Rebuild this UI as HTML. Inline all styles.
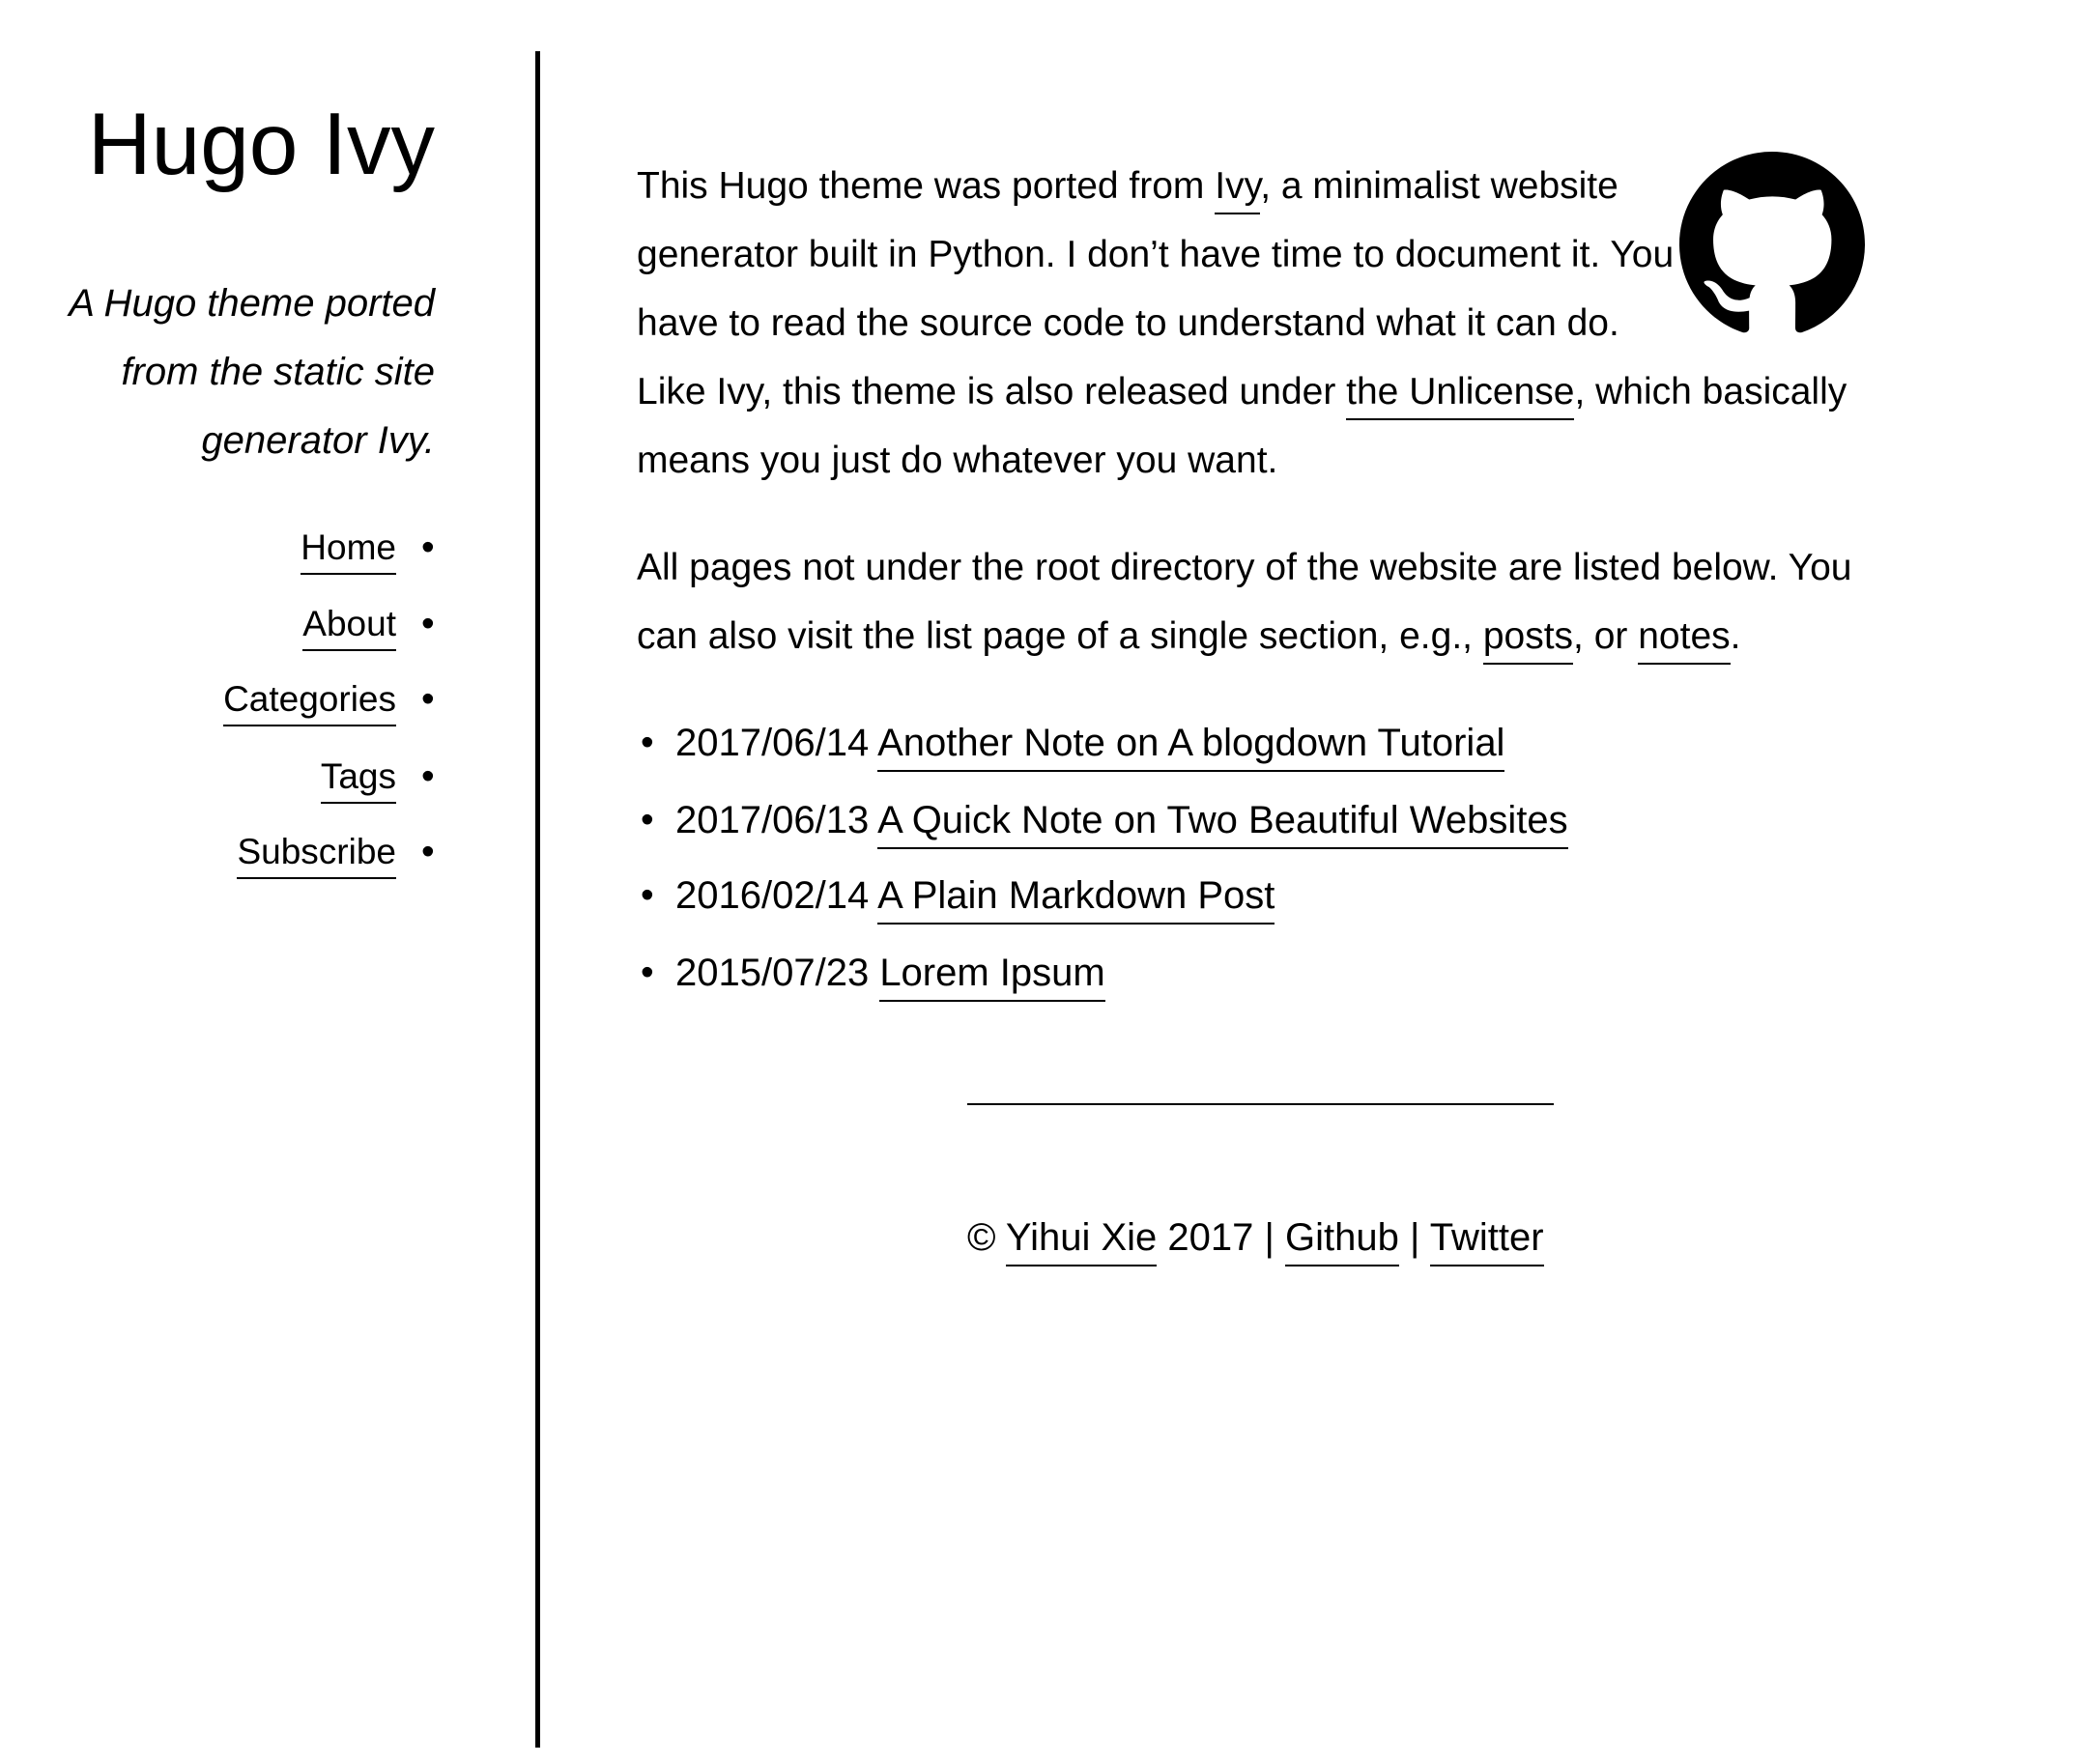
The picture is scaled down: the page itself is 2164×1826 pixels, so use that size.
<!DOCTYPE html>
<html><head><meta charset="utf-8">
<style>
html,body{margin:0;padding:0;background:#fff;}
body{width:2164px;height:1826px;position:relative;overflow:hidden;font-family:"Liberation Sans",sans-serif;color:#000;}
.a{position:absolute;white-space:nowrap;}
.t{font-size:39px;line-height:40px;}
.n{font-size:37px;line-height:40px;}
u{text-decoration:none;border-bottom:2px solid #000;padding-bottom:6px;}
.r{text-align:right;}
</style></head><body>
<div class="a" style="left:554px;top:53px;width:5px;height:1756px;background:#000"></div>

<div class="a r" style="right:1714px;top:100px;font-size:91px;line-height:100px;">Hugo Ivy</div>
<div class="a r" style="right:1714px;top:279px;font-size:40px;line-height:71px;font-style:italic;">A Hugo theme ported<br>from the static site<br>generator Ivy.</div>

<div class="a r n" style="right:1754px;top:547px;"><u>Home</u></div>
<div class="a r n" style="right:1754px;top:626px;"><u>About</u></div>
<div class="a r n" style="right:1754px;top:704px;"><u>Categories</u></div>
<div class="a r n" style="right:1754px;top:784px;"><u>Tags</u></div>
<div class="a r n" style="right:1754px;top:862px;"><u>Subscribe</u></div>
<div class="a t" style="left:436px;top:547px;">•</div>
<div class="a t" style="left:436px;top:626px;">•</div>
<div class="a t" style="left:436px;top:704px;">•</div>
<div class="a t" style="left:436px;top:784px;">•</div>
<div class="a t" style="left:436px;top:862px;">•</div>

<div class="a t" style="left:659px;top:173px;">This Hugo theme was ported from <u>Ivy</u>, a minimalist website</div>
<div class="a t" style="left:659px;top:244px;">generator built in Python. I don’t have time to document it. You</div>
<div class="a t" style="left:659px;top:315px;">have to read the source code to understand what it can do.</div>
<div class="a t" style="left:659px;top:386px;">Like Ivy, this theme is also released under <u>the Unlicense</u>, which basically</div>
<div class="a t" style="left:659px;top:457px;">means you just do whatever you want.</div>

<svg class="a" style="left:1738px;top:157px" width="192" height="192" viewBox="0 0 16 16"><path fill="#000" d="M8 0C3.58 0 0 3.58 0 8c0 3.540 2.29 6.53 5.47 7.59.4.07.55-.17.55-.38 0-.19-.01-.82-.01-1.49-2.01.37-2.53-.49-2.69-.94-.09-.23-.48-.94-.82-1.13-.28-.15-.68-.52-.01-.53.63-.01 1.08.58 1.23.82.72 1.21 1.87.87 2.33.66.07-.52.28-.87.51-1.07-1.78-.2-3.64-.89-3.64-3.95 0-.87.31-1.59.82-2.15-.08-.2-.36-1.02.08-2.12 0 0 .67-.21 2.2.82.64-.18 1.32-.27 2-.27.68 0 1.36.09 2 .27 1.53-1.04 2.2-.82 2.2-.82.44 1.1.16 1.92.08 2.12.51.56.82 1.27.82 2.15 0 3.07-1.87 3.75-3.65 3.95.29.25.54.73.54 1.48 0 1.07-.01 1.93-.01 2.2 0 .21.15.46.55.38A8.013 8.013 0 0016 8c0-4.42-3.58-8-8-8z"/></svg>

<div class="a t" style="left:659px;top:568px;">All pages not under the root directory of the website are listed below. You</div>
<div class="a t" style="left:659px;top:639px;">can also visit the list page of a single section, e.g., <u>posts</u>, or <u>notes</u>.</div>

<div class="a t" style="left:663px;top:749px;">•</div>
<div class="a t" style="left:663px;top:829px;">•</div>
<div class="a t" style="left:663px;top:907px;">•</div>
<div class="a t" style="left:663px;top:987px;">•</div>
<div class="a t" style="left:699px;top:749px;font-size:40px;">2017/06/14 <u>Another Note on A blogdown Tutorial</u></div>
<div class="a t" style="left:699px;top:829px;font-size:40px;">2017/06/13 <u>A Quick Note on Two Beautiful Websites</u></div>
<div class="a t" style="left:699px;top:907px;font-size:40px;">2016/02/14 <u>A Plain Markdown Post</u></div>
<div class="a t" style="left:699px;top:987px;font-size:40px;">2015/07/23 <u>Lorem Ipsum</u></div>

<div class="a" style="left:1001px;top:1142px;width:607px;height:2px;background:#000"></div>
<div class="a t" style="left:1001px;top:1261px;font-size:40px;">© <u>Yihui Xie</u> 2017 | <u>Github</u> | <u>Twitter</u></div>
</body></html>
